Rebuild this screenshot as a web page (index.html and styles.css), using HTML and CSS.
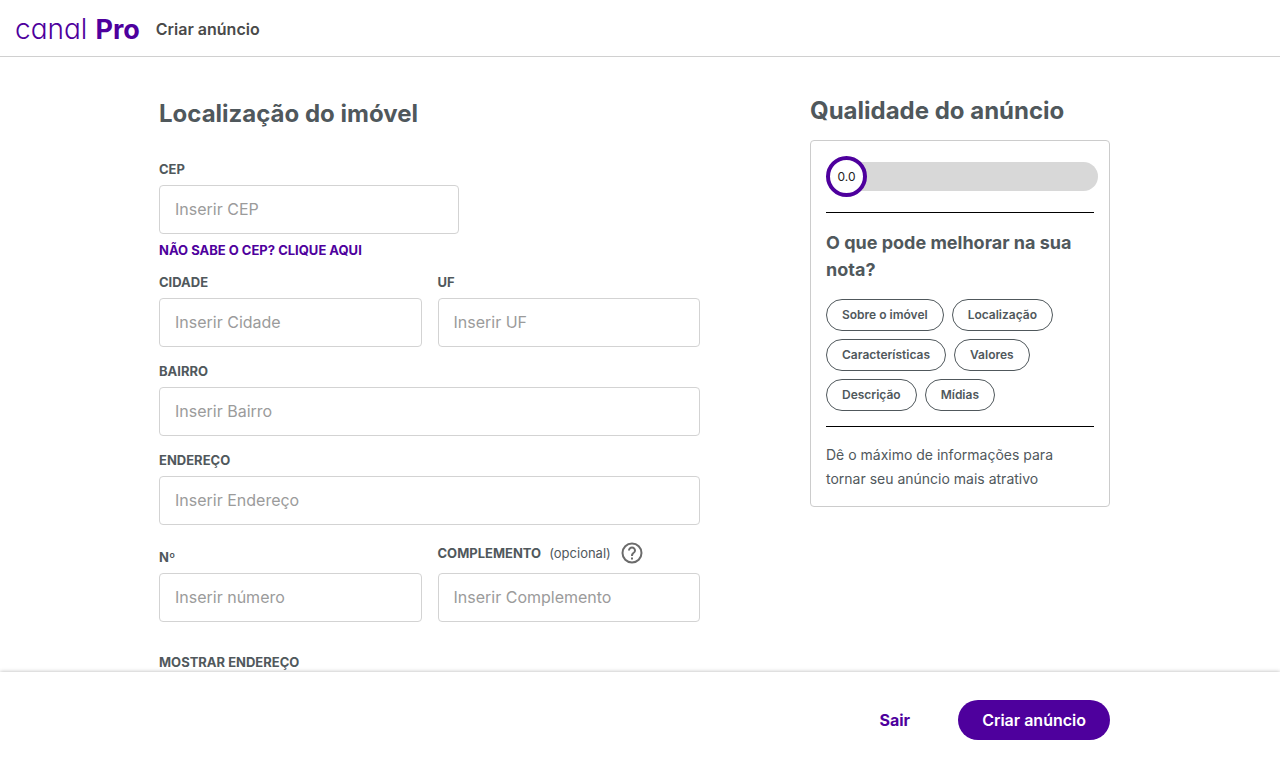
FILE: index.html
```html
<!DOCTYPE html>
<html lang="pt-BR">
<head>
<meta charset="utf-8">
<meta name="viewport" content="width=device-width, initial-scale=1">
<title>Criar anúncio</title>
<link rel="stylesheet" href="styles.css">
</head>
<body>
<header class="topbar">
  <a class="logo" href="#"><span class="logo-light">canal</span><span class="logo-bold">Pro</span></a>
  <h1 class="topbar-title">Criar anúncio</h1>
</header>
<main class="content">
  <div class="container columns">
    <form class="form" id="listing">
      <h2 class="title">Localização do imóvel</h2>
      <div class="fields">
        <div class="field field-short">
          <label class="label" for="cep">CEP</label>
          <input class="input" id="cep" type="text" placeholder="Inserir CEP">
          <a class="link" href="#">NÃO SABE O CEP? CLIQUE AQUI</a>
        </div>
        <div class="row">
          <div class="field">
            <label class="label" for="cidade">CIDADE</label>
            <input class="input" id="cidade" type="text" placeholder="Inserir Cidade">
          </div>
          <div class="field">
            <label class="label" for="uf">UF</label>
            <input class="input" id="uf" type="text" placeholder="Inserir UF">
          </div>
        </div>
        <div class="field">
          <label class="label" for="bairro">BAIRRO</label>
          <input class="input" id="bairro" type="text" placeholder="Inserir Bairro">
        </div>
        <div class="field">
          <label class="label" for="endereco">ENDEREÇO</label>
          <input class="input" id="endereco" type="text" placeholder="Inserir Endereço">
        </div>
        <div class="row">
          <div class="field">
            <label class="label" for="numero">Nº</label>
            <input class="input" id="numero" type="text" placeholder="Inserir número">
          </div>
          <div class="field">
            <div class="label-row">
              <label class="label" for="complemento">COMPLEMENTO <span class="optional">(opcional)</span></label>
              <button class="help" type="button" aria-label="Ajuda">
                <svg class="help-icon" viewBox="1 1 22 22" aria-hidden="true"><path d="M11 16.500h2v2h-2zM12 1.500a10.500 10.500 0 1 0 0 21 10.500 10.500 0 0 0 0-21zm0 19a8.500 8.500 0 1 1 0-17 8.500 8.500 0 0 1 0 17zM12 5.500c-2.210 0-4 1.790-4 4h2c0-1.100.9-2 2-2s2 .9 2 2c0 2-3 1.750-3 5.500h2c0-2.500 3-3 3-5.500 0-2.210-1.790-4-4-4z"/></svg>
              </button>
            </div>
            <input class="input" id="complemento" type="text" placeholder="Inserir Complemento">
          </div>
        </div>
      </div>
      <h3 class="label section">MOSTRAR ENDEREÇO</h3>
    </form>
    <aside class="quality">
      <h2 class="title">Qualidade do anúncio</h2>
      <section class="card">
        <div class="score">
          <span class="score-value">0.0</span>
          <span class="score-track"></span>
        </div>
        <hr class="rule">
        <h3 class="card-title">O que pode melhorar na sua nota?</h3>
        <div class="chips">
          <button class="chip" type="button">Sobre o imóvel</button>
          <button class="chip" type="button">Localização</button>
          <button class="chip" type="button">Características</button>
          <button class="chip" type="button">Valores</button>
          <button class="chip" type="button">Descrição</button>
          <button class="chip" type="button">Mídias</button>
        </div>
        <hr class="rule">
        <p class="tip">Dê o máximo de informações para tornar seu anúncio mais atrativo</p>
      </section>
    </aside>
  </div>
</main>
<footer class="actions">
  <div class="container actions-inner">
    <button class="button" type="button">Sair</button>
    <button class="button button-primary" type="submit" form="listing">Criar anúncio</button>
  </div>
</footer>
</body>
</html>
```
FILE: styles.css
```css
* {
  box-sizing: border-box;
  margin: 0;
}

body {
  display: flex;
  flex-direction: column;
  height: 100vh;
  background: #fff;
  color: #50585c;
  font-family: Inter, "Liberation Sans", sans-serif;
}

button,
input {
  font: inherit;
}

.topbar {
  display: flex;
  align-items: center;
  gap: 16px;
  height: 57px;
  padding: 2px 15px 0;
  border-bottom: 1px solid #d0d0d0;
  flex: none;
}

.logo {
  display: flex;
  align-items: baseline;
  gap: 8px;
  color: #4e009d;
  font-size: 28px;
  line-height: 32px;
  text-decoration: none;
}

.logo-light {
  font-weight: 300;
  font-feature-settings: "cv11";
}

.logo-bold {
  font-size: 27px;
  font-weight: 700;
}

.topbar-title {
  color: #4a4a4a;
  font-size: 16px;
  font-weight: 600;
  line-height: 24px;
}

.content {
  flex: 1;
  min-height: 0;
  overflow-y: auto;
}

.content,
.actions {
  padding: 0 27px 0 16px;
}

.container {
  max-width: 951px;
  margin: 0 auto;
}

.columns {
  display: grid;
  grid-template-columns: 1fr 300px;
  gap: 110px;
}

.form {
  padding-top: 41px;
}

.title {
  font-size: 24px;
  font-weight: 700;
  line-height: 32px;
}

.form .title {
  margin-bottom: 31px;
}

.fields {
  display: grid;
  gap: 16px;
}

.row {
  display: grid;
  grid-template-columns: 1fr 1fr;
  align-items: end;
  gap: 16px;
}

.field {
  display: flex;
  flex-direction: column;
  gap: 8px;
  min-width: 0;
}

.field-short {
  max-width: 300px;
}

.label,
.link {
  font-size: 13px;
  font-weight: 700;
  line-height: 16px;
}

.link {
  color: #4e009d;
  text-decoration: none;
}

.label-row {
  display: flex;
  align-items: center;
  gap: 10px;
  height: 24px;
}

.optional {
  margin-left: 5px;
  font-weight: 400;
}

.help {
  display: flex;
  padding: 0;
  border: 0;
  background: none;
}

.help-icon {
  width: 22px;
  height: 22px;
  fill: #6b6b6b;
}

.input {
  width: 100%;
  height: 49px;
  padding: 0 15px 2px;
  border: 1px solid #d3d3d3;
  border-radius: 4px;
  background: #fff;
  color: #50585c;
  font-size: 16px;
}

.input::placeholder {
  color: #9b9b9b;
  opacity: 1;
  font-weight: 400;
}

.section {
  margin-top: 32px;
}

.quality {
  padding-top: 38px;
}

.card {
  margin-top: 13px;
  padding: 15px;
  border: 1px solid #ccc;
  border-radius: 4px;
}

.score {
  display: flex;
  align-items: center;
  margin-right: -4px;
}

.score-value {
  z-index: 1;
  display: grid;
  place-items: center;
  width: 41px;
  height: 41px;
  border: 4px solid #4e009d;
  border-radius: 50%;
  background: #fff;
  color: #222;
  font-size: 12px;
}

.score-track {
  flex: 1;
  height: 29px;
  margin-left: -20px;
  border-radius: 15px;
  background: #d8d8d8;
}

.rule {
  margin: 15px 0 16px;
  border: 0;
  border-top: 1px solid #000;
}

.card-title {
  font-size: 18px;
  font-weight: 700;
  line-height: 27px;
}

.chips {
  display: flex;
  flex-wrap: wrap;
  gap: 8px;
  margin-top: 16px;
}

.chip {
  height: 32px;
  padding: 0 15px 2px;
  border: 1px solid #50585c;
  border-radius: 16px;
  background: #fff;
  color: #50585c;
  font-size: 12px;
  font-weight: 600;
}

.tip {
  font-size: 14px;
  font-weight: 400;
  line-height: 24px;
}

.actions {
  position: relative;
  flex: none;
  background: #fff;
  box-shadow: 0 0 4px rgba(0, 0, 0, 0.3);
}

.actions-inner {
  display: flex;
  justify-content: flex-end;
  gap: 24px;
  padding: 28px 0;
}

.button {
  height: 40px;
  padding: 0 24px;
  border: 0;
  border-radius: 20px;
  background: #fff;
  color: #4e009d;
  font-size: 16px;
  font-weight: 700;
}

.button-primary {
  background: #4e009d;
  color: #fff;
  font-weight: 600;
}
```
